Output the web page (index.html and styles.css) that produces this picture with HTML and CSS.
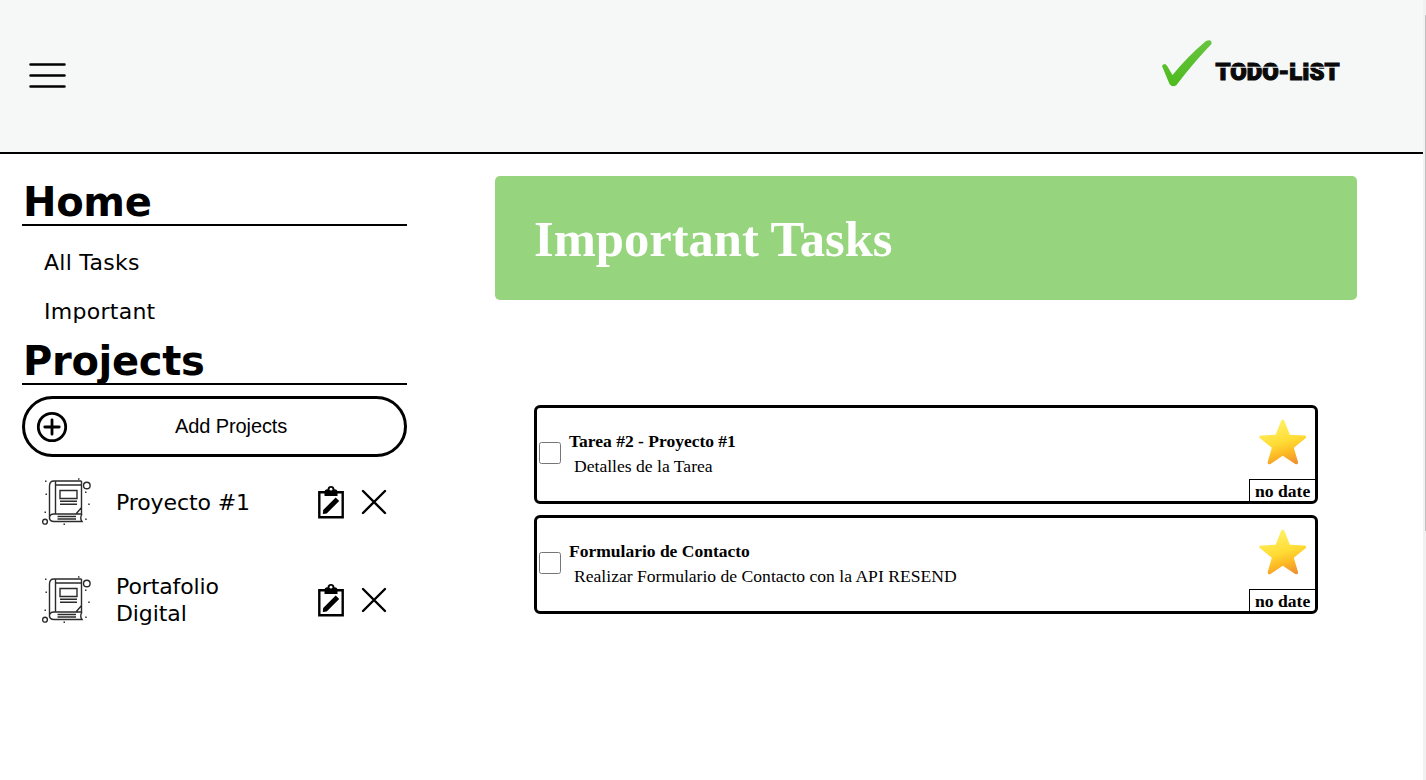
FILE: index.html
```html
<!DOCTYPE html>
<html lang="es">
<head>
<meta charset="utf-8">
<title>TODO-LIST</title>
<link rel="stylesheet" href="styles.css">
</head>
<body>
<svg class="defs" aria-hidden="true">
  <defs>
    <linearGradient id="gold" x1="0.35" y1="0" x2="0.65" y2="1">
      <stop offset="0" stop-color="#fff36a"/>
      <stop offset="0.5" stop-color="#ffdc35"/>
      <stop offset="0.75" stop-color="#fdb924"/>
      <stop offset="1" stop-color="#ee9230"/>
    </linearGradient>
    <linearGradient id="tick" x1="0" y1="0" x2="0" y2="1">
      <stop offset="0" stop-color="#67c43f"/>
      <stop offset="1" stop-color="#4dbb1d"/>
    </linearGradient>
    <symbol id="book" viewBox="0 0 50 50">
      <g fill="none" stroke="#2b2b2b" stroke-width="1.4">
        <path d="M39.500 3H12Q7.500 3 7.500 8V41M13.500 3V36M13.500 7H39.500M39.500 3V36H12Q7.500 36 7.500 39.800Q7.500 43.500 12 43.500H40Q37.500 40 40 36M34 36L39.500 29.500"/>
        <path d="M18 12.500H35V20.500H18ZM18 23.200H35M18 26.200H35M15.500 38.500H34M15.500 41H34"/>
        <circle cx="44.800" cy="7.500" r="3.300"/>
        <circle cx="3" cy="43.700" r="2.400"/>
      </g>
      <path fill="#333" d="M3 2.500h1.500v1.500H3zM36 .2h1.500v1.500H36zM3.500 15.500H5v1.500H3.500zM43 13.500h1.500V15H43zM46.200 25.500h1.500V27h-1.500zM2.500 33.500H4V35H2.500zM43.200 40.500h1.500V42h-1.500zM21.500 45.500H23V47h-1.500z"/>
    </symbol>
    <symbol id="edit" viewBox="0 0 26 33">
      <path d="M1.300 6.200H24.700V31.200H1.300Z" fill="none" stroke="#000" stroke-width="2.400"/>
      <path d="M6.500 10V6.500Q6.500 3.300 9.500 3.300Q10 0 13 0Q16 0 16.500 3.300Q19.500 3.300 19.500 6.500V10Z"/>
      <circle cx="13" cy="3.200" r="1.400" fill="#fff"/>
      <path d="M4.800 28L5.200 24L17.700 11.500L21.200 15L8.700 27.500Z"/>
    </symbol>
    <symbol id="close" viewBox="0 0 26 26">
      <path d="M2 2L24 24M24 2L2 24" stroke="#000" stroke-width="2.400" stroke-linecap="round"/>
    </symbol>
    <symbol id="star" viewBox="0 0 50 48">
      <path d="M24.800 1.500Q25.800 1.500 26.500 3L31.800 16.800L46.800 17.600Q49.500 18.500 47.200 20.500L35.800 29.700L40 44Q40.200 47.300 37.200 46L24.700 37.800L12.500 46Q9.500 47.300 9.700 44L13.800 29.700L2.300 20.500Q0 18.500 2.800 17.600L17.700 16.800L23 3Q23.800 1.500 24.800 1.500Z" fill="url(#gold)"/>
    </symbol>
  </defs>
</svg>
<div class="window">
  <div class="page">
    <header class="header">
      <svg class="menu" viewBox="0 0 40 28"><path d="M2.500 2.500H36.500M2.500 13.500H36.500M2.500 24.500H36.500"/></svg>
      <svg class="logo" viewBox="0 0 190 60">
        <path d="M6 31Q8.500 27 11.200 31L16.500 40Q32 21 50 6Q56 3.500 55.500 9Q38 27 20.500 50Q16.500 53 13.500 49Z" fill="url(#tick)"/>
        <text x="59.500" y="44.500" textLength="124" lengthAdjust="spacingAndGlyphs">TODO-LIST</text>
        <path d="M58 32.300H186" stroke="#f5f8f7" stroke-width="1.100"/>
      </svg>
    </header>
    <div class="layout">
      <nav class="sidebar">
        <h2>Home</h2>
        <ul class="links"><li>All Tasks</li><li>Important</li></ul>
        <h2>Projects</h2>
        <button class="add">
          <svg viewBox="0 0 32 32"><circle cx="16" cy="16" r="13.700"/><path d="M16 8.800V23.200M8.800 16H23.200"/></svg>
          <span>Add Projects</span>
        </button>
        <div class="project">
          <svg class="book"><use href="#book"/></svg><span>Proyecto #1</span>
          <svg class="edit"><use href="#edit"/></svg><svg class="close"><use href="#close"/></svg>
        </div>
        <div class="project">
          <svg class="book"><use href="#book"/></svg><span>Portafolio Digital</span>
          <svg class="edit"><use href="#edit"/></svg><svg class="close"><use href="#close"/></svg>
        </div>
      </nav>
      <main class="main">
        <h1>Important Tasks</h1>
        <div class="tasks">
          <article class="task">
            <input type="checkbox">
            <div class="copy"><h3>Tarea #2 - Proyecto #1</h3><p>Detalles de la Tarea</p></div>
            <div class="side"><svg class="star"><use href="#star"/></svg><span class="date">no date</span></div>
          </article>
          <article class="task">
            <input type="checkbox">
            <div class="copy"><h3>Formulario de Contacto</h3><p>Realizar Formulario de Contacto con la API RESEND</p></div>
            <div class="side"><svg class="star"><use href="#star"/></svg><span class="date">no date</span></div>
          </article>
        </div>
      </main>
    </div>
  </div>
  <div class="scroll"><div class="thumb"></div></div>
</div>
</body>
</html>
```
FILE: styles.css
```css
* { box-sizing: border-box; margin: 0; padding: 0; }
body { height: 780px; overflow: hidden; background: #fff; color: #000; font-family: "Liberation Serif", "Times New Roman", serif; }
svg { display: block; flex: none; }
.defs { position: absolute; width: 0; height: 0; }
.window { display: flex; height: 780px; }
.page { width: 1423px; }
.scroll { width: 3px; padding: 15px 0 0 2px; background: #f1f1f1; }
.thumb { height: 516px; background: #c1c1c1; }

.header { display: flex; justify-content: space-between; align-items: flex-start; height: 154px; padding: 0 65px 0 28px; background: #f5f8f7; border-bottom: 2px solid #000; }
.menu { width: 40px; height: 28px; margin-top: 62px; }
.menu path { fill: none; stroke: #000; stroke-width: 2.5; stroke-linecap: round; }
.logo { width: 190px; height: 60px; margin: 35px 12px 0 0; }
.logo text { font: 900 23px Roboto, "DejaVu Sans", sans-serif; fill: #0a0a0a; stroke: #0a0a0a; stroke-width: 1.1px; }

.layout { display: flex; }
.sidebar { width: 407px; padding: 24px 0 0 22px; font-family: "DejaVu Sans", Verdana, sans-serif; }
.sidebar h2 { height: 48px; padding-left: 1px; line-height: 49px; font-size: 40px; letter-spacing: -.3px; border-bottom: 2px solid #000; }
.links { height: 111px; padding: 11px 0 0 22px; list-style: none; font-size: 22px; letter-spacing: .27px; }
.links li { height: 49px; line-height: 52px; }
.add { display: flex; align-items: center; width: 385px; height: 61px; margin: 11px 0 9px; padding: 0 0 0 11px; border: 3px solid #000; border-radius: 31px; background: #fff; color: #000; font: 20px "Liberation Sans", Arial, sans-serif; letter-spacing: -.1px; }
.add svg { width: 32px; height: 32px; }
.add circle, .add path { fill: none; stroke: #000; stroke-width: 2.8; stroke-linecap: round; }
.add span { margin-left: 107px; }
.project { display: flex; align-items: center; height: 72px; margin-bottom: 26px; padding: 0 20px; font-size: 22px; line-height: 27px; letter-spacing: -.1px; }
.project span { width: 160px; margin-left: 24px; padding-right: 30px; }
.project:nth-of-type(1) span { padding-right: 0; }
.book { width: 50px; height: 50px; transform: translateY(1px); }
.edit { width: 26px; height: 33px; margin-left: 42px; }
.close { width: 26px; height: 26px; margin-left: 17px; }

.main { width: 862px; margin: 22px 0 0 88px; }
.main h1 { height: 124px; padding-left: 39px; line-height: 127px; font-size: 50.6px; color: #fff; background: #96d57d; border-radius: 5px; }
.tasks { display: flex; flex-direction: column; gap: 11px; padding: 105px 39px 0; }
.task { display: flex; align-items: center; height: 99px; border: 3px solid #000; border-radius: 6px; }
.task input { width: 22px; height: 22px; margin: 0 0 4px 2px; }
.copy { flex: 1; margin: 0 0 2px 8px; }
.copy h3 { height: 25px; font-size: 17.5px; line-height: 25px; }
.copy p { height: 25px; padding-left: 5px; font-size: 17.6px; line-height: 25px; }
.side { display: flex; flex-direction: column; align-items: flex-end; justify-content: space-between; height: 93px; padding-top: 10px; }
.star { width: 50px; height: 48px; margin-right: 7px; }
.date { width: 66px; height: 22px; padding-left: 5px; border: solid #000; border-width: 1px 0 0 1px; font-size: 17.6px; font-weight: bold; line-height: 22px; white-space: nowrap; }
```
